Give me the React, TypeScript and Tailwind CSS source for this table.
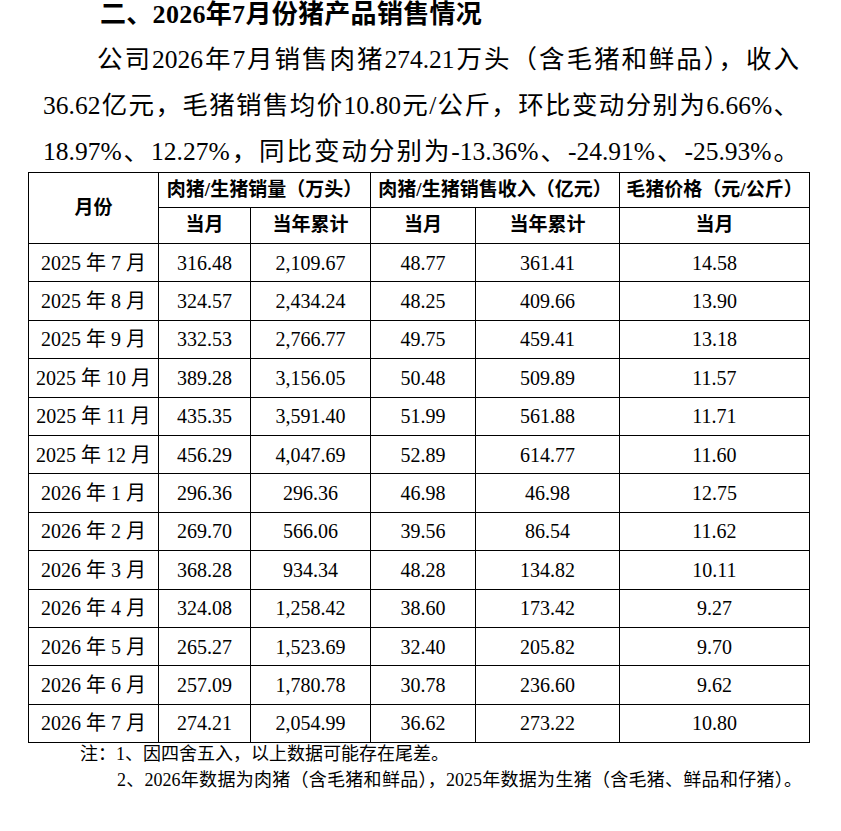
import React from 'react';

const rows: string[][] = [
  ['2025 年 7 月', '316.48', '2,109.67', '48.77', '361.41', '14.58'],
  ['2025 年 8 月', '324.57', '2,434.24', '48.25', '409.66', '13.90'],
  ['2025 年 9 月', '332.53', '2,766.77', '49.75', '459.41', '13.18'],
  ['2025 年 10 月', '389.28', '3,156.05', '50.48', '509.89', '11.57'],
  ['2025 年 11 月', '435.35', '3,591.40', '51.99', '561.88', '11.71'],
  ['2025 年 12 月', '456.29', '4,047.69', '52.89', '614.77', '11.60'],
  ['2026 年 1 月', '296.36', '296.36', '46.98', '46.98', '12.75'],
  ['2026 年 2 月', '269.70', '566.06', '39.56', '86.54', '11.62'],
  ['2026 年 3 月', '368.28', '934.34', '48.28', '134.82', '10.11'],
  ['2026 年 4 月', '324.08', '1,258.42', '38.60', '173.42', '9.27'],
  ['2026 年 5 月', '265.27', '1,523.69', '32.40', '205.82', '9.70'],
  ['2026 年 6 月', '257.09', '1,780.78', '30.78', '236.60', '9.62'],
  ['2026 年 7 月', '274.21', '2,054.99', '36.62', '273.22', '10.80'],
];

const serif = "font-['Liberation_Serif','Noto_Sans_CJK_SC',serif]";
const head = "font-['Liberation_Serif','Noto_Sans_CJK_SC',sans-serif] font-bold text-[19px]";

export default function App() {
  return (
    <div lang="zh-CN" className={`w-[841px] h-[831px] bg-white text-black ${serif}`}>
      {/* heading */}
      <div className="h-[30px] pl-[100px] text-[26px] leading-[30px] font-bold tracking-[0.3px] whitespace-nowrap">
        二、2026年7月份猪产品销售情况
      </div>

      {/* paragraph */}
      <div className="ml-[43px] w-[756px] pt-[7px] text-[25.5px]">
        <div className="pl-[54px] leading-[46px] text-justify [text-align-last:justify]">
          公司2026年7月销售肉猪274.21万头（含毛猪和鲜品），收入
        </div>
        <div className="leading-[46px] text-justify [text-align-last:justify]">
          36.62亿元，毛猪销售均价10.80元/公斤，环比变动分别为6.66%、
        </div>
        <div className="mt-[3px] leading-[40px] text-justify [text-align-last:justify]">
          18.97%、12.27%，同比变动分别为-13.36%、-24.91%、-25.93%。
        </div>
      </div>

      {/* table */}
      <table className="ml-[28px] w-[781px] table-fixed border-collapse">
        <colgroup>
          <col className="w-[130px]" />
          <col className="w-[92px]" />
          <col className="w-[120px]" />
          <col className="w-[105px]" />
          <col className="w-[144px]" />
          <col className="w-[190px]" />
        </colgroup>
        <thead>
          <tr className="h-[35px]">
            <th rowSpan={2} className={`border border-black text-center ${head}`}>月份</th>
            <th colSpan={2} className={`border border-black text-center whitespace-nowrap ${head}`}>
              肉猪/生猪销量（万头）
            </th>
            <th colSpan={2} className={`border border-black text-center whitespace-nowrap ${head}`}>
              肉猪/生猪销售收入（亿元）
            </th>
            <th className={`border border-black text-center whitespace-nowrap ${head}`}>毛猪价格（元/公斤）</th>
          </tr>
          <tr className="h-[36px]">
            <th className={`border border-black text-center ${head}`}>当月</th>
            <th className={`border border-black text-center ${head}`}>当年累计</th>
            <th className={`border border-black text-center ${head}`}>当月</th>
            <th className={`border border-black text-center ${head}`}>当年累计</th>
            <th className={`border border-black text-center ${head}`}>当月</th>
          </tr>
        </thead>
        <tbody>
          {rows.map((r) => (
            <tr key={r[0]} className="h-[38.4px]">
              {r.map((c, i) => (
                <td key={i} className="border border-black p-0 text-center text-[20px] leading-none whitespace-nowrap">
                  {c}
                </td>
              ))}
            </tr>
          ))}
        </tbody>
      </table>

      {/* notes */}
      <div className="text-[18px]">
        <div className="pl-[80px] leading-[22px] whitespace-nowrap">注：1、因四舍五入，以上数据可能存在尾差。</div>
        <div className="ml-[117px] w-[685px] leading-[30px] text-justify [text-align-last:justify]">
          2、2026年数据为肉猪（含毛猪和鲜品），2025年数据为生猪（含毛猪、鲜品和仔猪）。
        </div>
      </div>
    </div>
  );
}
